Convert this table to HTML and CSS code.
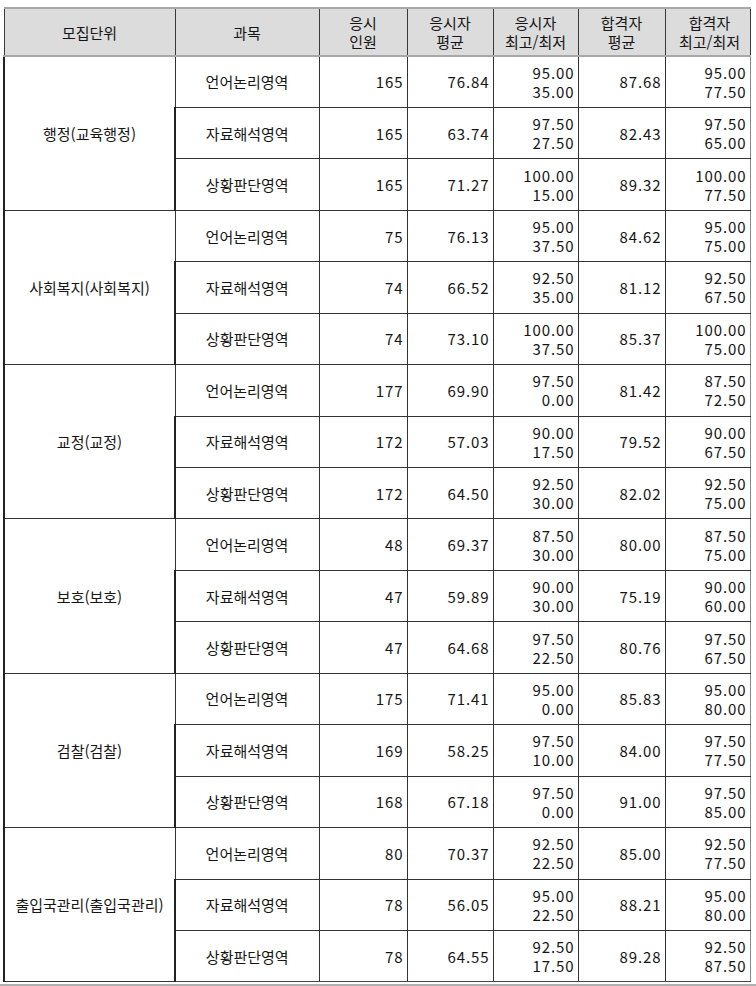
FILE: index.html
```html
<!DOCTYPE html>
<html lang="ko">
<head>
<meta charset="utf-8">
<link rel="stylesheet" href="styles.css">
</head>
<body>
<table class="score">
<colgroup>
<col class="c1"><col class="c2"><col class="c3"><col class="c4"><col class="c5"><col class="c6"><col class="c7">
</colgroup>
<thead>
<tr>
<th>모집단위</th><th>과목</th><th>응시<br>인원</th><th>응시자<br>평균</th><th>응시자<br>최고/최저</th><th>합격자<br>평균</th><th>합격자<br>최고/최저</th>
</tr>
</thead>
<tbody>
<tr><td rowspan="3" class="unit">행정(교육행정)</td><td class="subj">언어논리영역</td><td class="num">165</td><td class="num">76.84</td><td class="num">95.00<br>35.00</td><td class="num">87.68</td><td class="num">95.00<br>77.50</td></tr>
<tr><td class="subj">자료해석영역</td><td class="num">165</td><td class="num">63.74</td><td class="num">97.50<br>27.50</td><td class="num">82.43</td><td class="num">97.50<br>65.00</td></tr>
<tr><td class="subj">상황판단영역</td><td class="num">165</td><td class="num">71.27</td><td class="num">100.00<br>15.00</td><td class="num">89.32</td><td class="num">100.00<br>77.50</td></tr>

<tr><td rowspan="3" class="unit">사회복지(사회복지)</td><td class="subj">언어논리영역</td><td class="num">75</td><td class="num">76.13</td><td class="num">95.00<br>37.50</td><td class="num">84.62</td><td class="num">95.00<br>75.00</td></tr>
<tr><td class="subj">자료해석영역</td><td class="num">74</td><td class="num">66.52</td><td class="num">92.50<br>35.00</td><td class="num">81.12</td><td class="num">92.50<br>67.50</td></tr>
<tr><td class="subj">상황판단영역</td><td class="num">74</td><td class="num">73.10</td><td class="num">100.00<br>37.50</td><td class="num">85.37</td><td class="num">100.00<br>75.00</td></tr>

<tr><td rowspan="3" class="unit">교정(교정)</td><td class="subj">언어논리영역</td><td class="num">177</td><td class="num">69.90</td><td class="num">97.50<br>0.00</td><td class="num">81.42</td><td class="num">87.50<br>72.50</td></tr>
<tr><td class="subj">자료해석영역</td><td class="num">172</td><td class="num">57.03</td><td class="num">90.00<br>17.50</td><td class="num">79.52</td><td class="num">90.00<br>67.50</td></tr>
<tr><td class="subj">상황판단영역</td><td class="num">172</td><td class="num">64.50</td><td class="num">92.50<br>30.00</td><td class="num">82.02</td><td class="num">92.50<br>75.00</td></tr>

<tr><td rowspan="3" class="unit">보호(보호)</td><td class="subj">언어논리영역</td><td class="num">48</td><td class="num">69.37</td><td class="num">87.50<br>30.00</td><td class="num">80.00</td><td class="num">87.50<br>75.00</td></tr>
<tr><td class="subj">자료해석영역</td><td class="num">47</td><td class="num">59.89</td><td class="num">90.00<br>30.00</td><td class="num">75.19</td><td class="num">90.00<br>60.00</td></tr>
<tr><td class="subj">상황판단영역</td><td class="num">47</td><td class="num">64.68</td><td class="num">97.50<br>22.50</td><td class="num">80.76</td><td class="num">97.50<br>67.50</td></tr>

<tr><td rowspan="3" class="unit">검찰(검찰)</td><td class="subj">언어논리영역</td><td class="num">175</td><td class="num">71.41</td><td class="num">95.00<br>0.00</td><td class="num">85.83</td><td class="num">95.00<br>80.00</td></tr>
<tr><td class="subj">자료해석영역</td><td class="num">169</td><td class="num">58.25</td><td class="num">97.50<br>10.00</td><td class="num">84.00</td><td class="num">97.50<br>77.50</td></tr>
<tr><td class="subj">상황판단영역</td><td class="num">168</td><td class="num">67.18</td><td class="num">97.50<br>0.00</td><td class="num">91.00</td><td class="num">97.50<br>85.00</td></tr>

<tr><td rowspan="3" class="unit">출입국관리(출입국관리)</td><td class="subj">언어논리영역</td><td class="num">80</td><td class="num">70.37</td><td class="num">92.50<br>22.50</td><td class="num">85.00</td><td class="num">92.50<br>77.50</td></tr>
<tr><td class="subj">자료해석영역</td><td class="num">78</td><td class="num">56.05</td><td class="num">95.00<br>22.50</td><td class="num">88.21</td><td class="num">95.00<br>80.00</td></tr>
<tr><td class="subj">상황판단영역</td><td class="num">78</td><td class="num">64.55</td><td class="num">92.50<br>17.50</td><td class="num">89.28</td><td class="num">92.50<br>87.50</td></tr>
</tbody>
</table>
<div class="scrollbar"></div>
</body>
</html>
```

FILE: styles.css
```css
html, body {
  margin: 0;
  padding: 0;
  background: #ffffff;
}
body {
  padding: 7px 0 0 3px;
  font-family: "Noto Sans CJK KR", "Noto Sans", sans-serif;
  font-size: 15px;
  color: #151515;
}
.score {
  border-collapse: collapse;
  table-layout: fixed;
  width: 746px;
}
.c1 { width: 171px; }
.c2 { width: 144px; }
.c3 { width: 88px; }
.c4 { width: 86px; }
.c5 { width: 85px; }
.c6 { width: 87px; }
.c7 { width: 85px; }

.score th {
  background: #dcdcdc;
  font-weight: normal;
  height: 46px;
  padding: 0;
  line-height: 19px;
  text-align: center;
  border: 1px solid #3a3a3a;
  border-top: 2px solid #a8a8a8;
  border-bottom: 2px solid #a8a8a8;
}
.score th:last-child {
  padding-left: 4px;
}
.score td {
  height: 51.45px;
  padding: 0 3px 0 3px;
  line-height: 19px;
  border: 1px solid #333333;
  box-sizing: border-box;
}
.score tbody tr td:first-child {
  border-left: 2px solid #222222;
}
.score td:last-child {
  border-right: 1px solid #888888;
}
.score tbody tr:last-child td {
  border-bottom: 1px solid #444444;
}
.unit {
  text-align: center;
}
.subj {
  text-align: center;
}
.num {
  text-align: right;
  letter-spacing: 0.9px;
}
.scrollbar {
  margin-top: 2px;
  margin-left: -3px;
  height: 0;
  border-top: 2px solid #b0b0b0;
  width: 756px;
}
```
